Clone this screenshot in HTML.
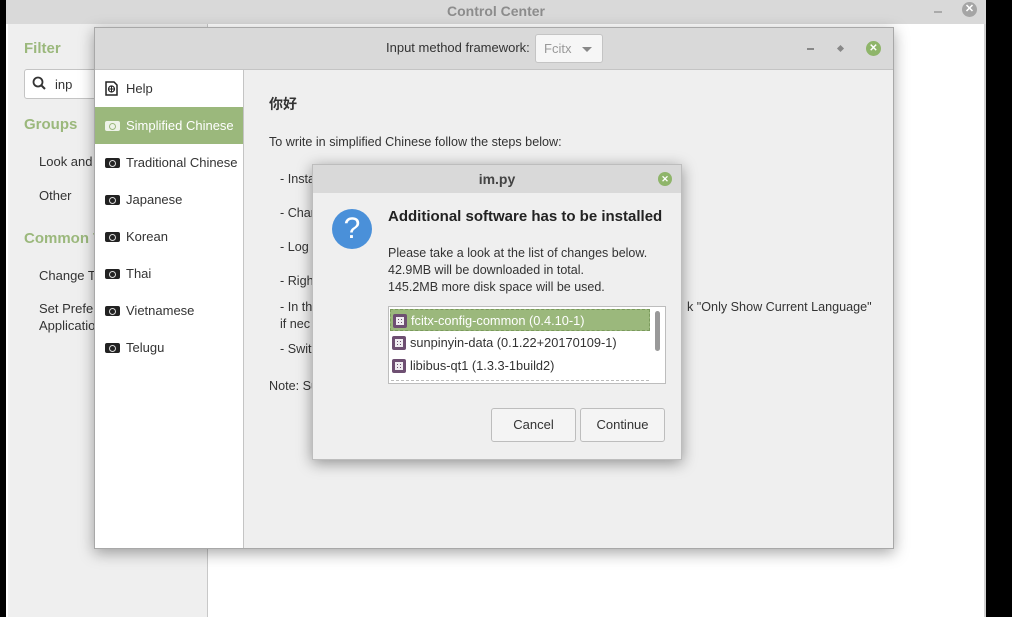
<!DOCTYPE html>
<html><head><style>
*{margin:0;padding:0;box-sizing:border-box}
body{width:1012px;height:617px;background:#000;position:relative;overflow:hidden;font-family:"Liberation Sans","Noto Sans CJK SC",sans-serif;font-size:12.6px;color:#333}
.abs{position:absolute}
.cc{left:6px;top:0;width:980px;height:617px;background:#fff;border-right:2px solid #d0d0d0}
.cctitle{left:0;top:0;width:980px;height:24px;background:#d9d9d9;text-align:center;line-height:23px;color:#8c8c8c;font-weight:bold;font-size:14px}
.side{left:2px;top:24px;width:200px;height:593px;background:#efefef;border-right:1px solid #c8c8c8}
.green{color:#9bb87c;font-weight:bold;font-size:15px}
.win{left:94px;top:27px;width:800px;height:522px;background:#efefef;border:1px solid #a8a8a8;box-shadow:0 4px 14px rgba(0,0,0,.35)}
.wtitle{left:0;top:0;width:798px;height:42px;background:#d9d9d9;border-bottom:1px solid #c4c4c4}
.list{left:0;top:42px;width:149px;height:478px;background:#fff;border-right:1px solid #c4c4c4}
.item{position:absolute;left:0;width:148px;height:37px;line-height:37px;padding-left:31px;color:#333;font-size:13px}
.item.sel{background:#9bb87c;color:#fff}
.flag{position:absolute;left:10px;top:14px;width:15px;height:10px;background:#222;border-radius:2px}
.flag:after{content:"";position:absolute;left:4px;top:2px;width:5px;height:5px;border:1px solid #ddd;border-radius:50%}
.sel .flag{background:#eef3e8}.sel .flag:after{border-color:#9bb87c}
.dlg{left:312px;top:164px;width:370px;height:296px;background:#efefef;border:1px solid #bdbdbd;box-shadow:0 3px 14px rgba(0,0,0,.4)}
.btn{position:absolute;height:34px;border:1px solid #bdbdbd;border-radius:3px;background:#f4f4f4;text-align:center;line-height:32px;color:#333;font-size:13px}
.pkg{position:absolute;left:1px;width:260px;height:22px;line-height:22px;padding-left:20px;color:#333;font-size:12.8px}
.pi{position:absolute;left:2px;top:4px;width:14px;height:14px;background:#6e4f72;border-radius:2px}
.pi:after{content:"";position:absolute;left:3px;top:3px;width:8px;height:8px;background-image:linear-gradient(90deg,#fff 2px,transparent 2px),linear-gradient(#fff 2px,transparent 2px);background-size:3px 3px;opacity:.9;mix-blend-mode:normal}
</style></head><body>
<div class="abs cc">
 <div class="abs cctitle">Control Center</div>
 <div class="abs" style="left:928px;top:11px;width:8px;height:2px;background:#aaa"></div>
 <div class="abs" style="left:932px;top:8px;width:5px;height:5px;background:#aaa;transform:rotate(45deg);display:none"></div>
 <div class="abs" style="left:956px;top:2px;width:15px;height:15px;border-radius:50%;background:#a5a5a5;color:#fff;font-size:11px;font-weight:bold;text-align:center;line-height:15px">✕</div>
 <div class="abs side">
  <div class="abs green" style="left:16px;top:16px">Filter</div>
  <div class="abs" style="left:16px;top:45px;width:100px;height:30px;background:#fff;border:1px solid #c4c4c4;border-radius:3px;padding:7px 0 0 30px;font-size:13px">inp</div>
  <svg class="abs" style="left:24px;top:52px" width="14" height="14"><circle cx="6" cy="6" r="4.5" fill="none" stroke="#333" stroke-width="1.8"/><path d="M9 9L13 13" stroke="#333" stroke-width="2"/></svg>
  <div class="abs green" style="left:16px;top:92px">Groups</div>
  <div class="abs" style="left:31px;top:130px;font-size:13px">Look and I</div>
  <div class="abs" style="left:31px;top:164px;font-size:13px">Other</div>
  <div class="abs green" style="left:16px;top:206px">Common T</div>
  <div class="abs" style="left:31px;top:244px;font-size:13px">Change Th</div>
  <div class="abs" style="left:31px;top:276px;line-height:17px;font-size:13px">Set Prefer<br>Applicatio</div>
 </div>
</div>
<div class="abs win">
 <div class="abs wtitle">
  <div class="abs" style="left:291px;top:12px;font-size:13px">Input method framework:</div>
  <div class="abs" style="left:440px;top:6px;width:68px;height:29px;background:#f6f6f6;border:1px solid #c4c4c4;border-radius:3px;color:#999;padding:6px 0 0 8px;font-size:13px">Fcitx<span style="position:absolute;left:46px;top:12px;border:5px solid transparent;border-top:5px solid #888"></span></div>
  <div class="abs" style="left:712px;top:20px;width:7px;height:2px;background:#888"></div>
  <div class="abs" style="left:743px;top:18px;width:5px;height:5px;background:#888;transform:rotate(45deg)"></div>
  <div class="abs" style="left:771px;top:13px;width:15px;height:15px;border-radius:50%;background:#8fb56a;color:#fff;font-size:10px;font-weight:bold;text-align:center;line-height:15px">✕</div>
 </div>
 <div class="abs list">
  <div class="item" style="top:0"><svg style="position:absolute;left:10px;top:11px" width="13" height="15"><path d="M1 1h8l3 3v10H1z" fill="#fff" stroke="#222" stroke-width="1.5"/><circle cx="6.5" cy="8" r="3" fill="none" stroke="#222" stroke-width="1.2"/><path d="M3.5 8h6M6.5 5v6" stroke="#222"/></svg>Help</div>
  <div class="item sel" style="top:37px"><span class="flag"></span>Simplified Chinese</div>
  <div class="item" style="top:74px"><span class="flag"></span>Traditional Chinese</div>
  <div class="item" style="top:111px"><span class="flag"></span>Japanese</div>
  <div class="item" style="top:148px"><span class="flag"></span>Korean</div>
  <div class="item" style="top:185px"><span class="flag"></span>Thai</div>
  <div class="item" style="top:222px"><span class="flag"></span>Vietnamese</div>
  <div class="item" style="top:259px"><span class="flag"></span>Telugu</div>
 </div>
 <div class="abs" style="left:174px;top:66px;font-weight:bold;font-size:14px">你好</div>
 <div class="abs" style="left:174px;top:107px">To write in simplified Chinese follow the steps below:</div>
 <div class="abs" style="left:185px;top:144px">- Insta</div>
 <div class="abs" style="left:185px;top:178px">- Char</div>
 <div class="abs" style="left:185px;top:212px">- Log</div>
 <div class="abs" style="left:185px;top:246px">- Righ</div>
 <div class="abs" style="left:185px;top:272px">- In th</div>
 <div class="abs" style="left:592px;top:272px">k "Only Show Current Language"</div>
 <div class="abs" style="left:185px;top:289px">if nec</div>
 <div class="abs" style="left:185px;top:314px">- Swit</div>
 <div class="abs" style="left:174px;top:351px">Note: Su</div>
</div>
<div class="abs dlg">
 <div class="abs" style="left:0;top:0;width:368px;height:28px;background:#d9d9d9;text-align:center;line-height:28px;font-weight:bold;font-size:14px;color:#444">im.py</div>
 <div class="abs" style="left:345px;top:7px;width:14px;height:14px;border-radius:50%;background:#8fb56a;color:#fff;font-size:9px;font-weight:bold;text-align:center;line-height:14px">✕</div>
 <div class="abs" style="left:19px;top:44px;width:40px;height:40px;border-radius:50%;background:#4a90d9;color:#fff;font-size:30px;text-align:center;line-height:40px">?</div>
 <div class="abs" style="left:75px;top:43px;font-weight:bold;font-size:15px;color:#222">Additional software has to be installed</div>
 <div class="abs" style="left:75px;top:80px;line-height:17px;font-size:12.5px">Please take a look at the list of changes below.<br>42.9MB will be downloaded in total.<br>145.2MB more disk space will be used.</div>
 <div class="abs" style="left:75px;top:141px;width:278px;height:78px;background:#fff;border:1px solid #bdbdbd;overflow:hidden">
  <div class="pkg" style="top:2px;background:#9bb87c;color:#fff;border:1px dashed #7a9a5c"><span class="pi"></span>fcitx-config-common (0.4.10-1)</div>
  <div class="pkg" style="top:25px"><span class="pi"></span>sunpinyin-data (0.1.22+20170109-1)</div>
  <div class="pkg" style="top:48px"><span class="pi"></span>libibus-qt1 (1.3.3-1build2)</div>
  <div class="abs" style="left:2px;top:73px;width:258px;border-top:1px dashed #bbb"></div>
  <div class="abs" style="left:266px;top:4px;width:5px;height:40px;background:#999;border-radius:3px"></div>
 </div>
 <div class="btn" style="left:178px;top:243px;width:85px">Cancel</div>
 <div class="btn" style="left:267px;top:243px;width:85px">Continue</div>
</div>
</body></html>
